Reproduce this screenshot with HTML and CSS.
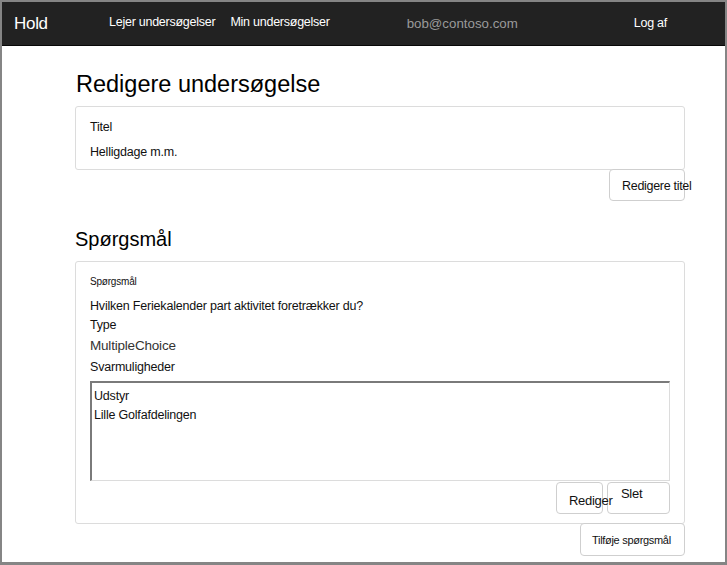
FILE: index.html
```html
<!DOCTYPE html>
<html lang="da">
<head>
<meta charset="utf-8">
<title>Redigere undersøgelse</title>
<link rel="stylesheet" href="styles.css">
</head>
<body>
<div class="frame">
  <nav class="navbar">
    <a class="brand" href="#">Hold</a>
    <a class="nav-link" href="#">Lejer undersøgelser</a>
    <a class="nav-link second" href="#">Min undersøgelser</a>
    <span class="user">bob@contoso.com</span>
    <a class="nav-link logout" href="#">Log af</a>
  </nav>
  <main class="content">
    <h1 class="page-title">Redigere undersøgelse</h1>
    <section class="panel title-panel">
      <div class="label">Titel</div>
      <div class="value">Helligdage m.m.</div>
    </section>
    <div class="actions">
      <button class="btn btn-title">Redigere titel</button>
    </div>
    <h2 class="section-title">Spørgsmål</h2>
    <section class="panel question-panel">
      <div class="label small">Spørgsmål</div>
      <div class="value question">Hvilken Feriekalender part aktivitet foretrækker du?</div>
      <div class="label">Type</div>
      <div class="value type">MultipleChoice</div>
      <div class="label">Svarmuligheder</div>
      <textarea class="choices" readonly>Udstyr
Lille Golfafdelingen</textarea>
      <div class="row-actions">
        <button class="btn btn-edit">Rediger</button>
        <button class="btn btn-delete">Slet</button>
      </div>
    </section>
    <div class="actions">
      <button class="btn btn-add">Tilføje spørgsmål</button>
    </div>
  </main>
</div>
</body>
</html>
```

FILE: styles.css
```css
html, body {
  margin: 0;
  padding: 0;
  background: #fff;
}

body {
  font-family: "Liberation Sans", Arial, sans-serif;
  color: #111;
}

.frame {
  width: 727px;
  height: 565px;
  box-sizing: border-box;
  border-top: 2px solid #858585;
  border-left: 2px solid #858585;
  border-right: 2px solid #858585;
  border-bottom: 3px solid #858585;
  overflow: hidden;
}

.navbar {
  height: 43px;
  background: #222;
  border-bottom: 1px solid #080808;
  display: flex;
  align-items: center;
}

.navbar a {
  text-decoration: none;
}

.brand {
  color: #fff;
  font-size: 17px;
  margin-left: 12px;
  width: 95px;
  letter-spacing: -0.3px;
}

.nav-link {
  color: #fff;
  font-size: 12.5px;
  letter-spacing: -0.25px;
  margin-top: -3px;
}

.nav-link.second {
  margin-left: 15px;
}

.user {
  color: #9a9a9a;
  font-size: 13.3px;
  margin-left: 77px;
  margin-top: -1px;
}

.nav-link.logout {
  margin-left: 116px;
  margin-top: -1px;
}

.content {
  margin-left: 73px;
  width: 610px;
}

.page-title {
  font-size: 23.5px;
  font-weight: normal;
  line-height: 26px;
  margin: 25px 0 9px 1px;
  color: #000;
}

.panel {
  border: 1px solid #dcdcdc;
  border-radius: 3px;
  padding: 11px 14px 8px;
}

.label,
.value {
  font-size: 12.5px;
  line-height: 18px;
  letter-spacing: -0.2px;
}

.title-panel .label {
  margin-bottom: 7px;
}

.actions {
  display: flex;
  justify-content: flex-end;
}

.btn {
  font-family: "Liberation Sans", Arial, sans-serif;
  background: #fff;
  border: 1px solid #cfcfcf;
  border-radius: 4px;
  color: #111;
  font-size: 12.5px;
  letter-spacing: -0.3px;
  text-align: left;
  white-space: nowrap;
  overflow: visible;
  padding: 0 0 0 12px;
  margin: 0;
}

.btn-title {
  width: 76px;
  height: 32px;
  margin-top: -1px;
  padding-top: 2px;
}

.section-title {
  font-size: 20px;
  font-weight: normal;
  line-height: 24px;
  margin: 26px 0 10px 0;
  color: #000;
}

.question-panel {
  padding: 12px 14px 9px;
}

.question-panel .value {
  margin-bottom: 3px;
}

.question-panel .value.question {
  margin-bottom: 1px;
}

.question-panel .label {
  margin-bottom: 3px;
}

.question-panel .label.small {
  font-size: 10px;
  line-height: 16px;
  margin-bottom: 7px;
}

.value.type {
  font-size: 13.5px;
  color: #333;
}

.choices {
  display: block;
  box-sizing: border-box;
  width: 580px;
  height: 100px;
  margin: 5px 0 0 0;
  padding: 4px 2px;
  border-top: 2px solid #7a7a7a;
  border-left: 2px solid #7a7a7a;
  border-right: 1px solid #dcdcdc;
  border-bottom: 1px solid #dcdcdc;
  font-family: "Liberation Sans", Arial, sans-serif;
  font-size: 12.5px;
  line-height: 19px;
  letter-spacing: -0.2px;
  color: #111;
  resize: none;
  outline: none;
  overflow: hidden;
}

.row-actions {
  display: flex;
  justify-content: flex-end;
  gap: 4px;
  margin-top: 1px;
}

.btn-edit {
  width: 47px;
  height: 32px;
  font-size: 13px;
  padding-left: 12px;
  padding-top: 4px;
  position: relative;
  z-index: 1;
  background: transparent;
}

.btn-delete {
  width: 63px;
  height: 32px;
  font-size: 13px;
  padding-left: 13px;
  padding-bottom: 9px;
}

.btn-add {
  width: 105px;
  height: 33px;
  margin-top: -1px;
  font-size: 11px;
  padding-left: 11px;
}
```
